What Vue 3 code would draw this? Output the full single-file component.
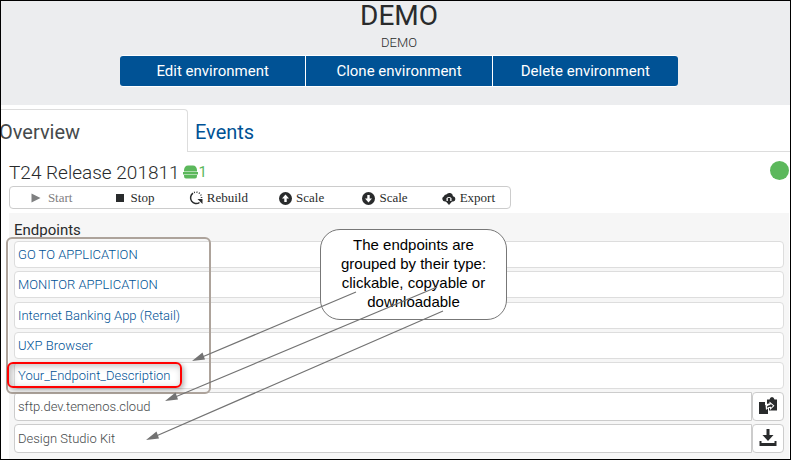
<script setup>
import { ref } from 'vue'

const environmentActions = ['Edit environment', 'Clone environment', 'Delete environment']
const tabs = ['Overview', 'Events']
const activeTab = ref('Overview')

const releaseActions = [
  { id: 'start', label: 'Start', icon: 'play', disabled: true },
  { id: 'stop', label: 'Stop', icon: 'stop' },
  { id: 'rebuild', label: 'Rebuild', icon: 'rebuild' },
  { id: 'scale-up', label: 'Scale', icon: 'up' },
  { id: 'scale-down', label: 'Scale', icon: 'down' },
  { id: 'export', label: 'Export', icon: 'export' }
]

const links = [
  'GO TO APPLICATION',
  'MONITOR APPLICATION',
  'Internet Banking App (Retail)',
  'UXP Browser',
  'Your_Endpoint_Description'
]

const resources = [
  { value: 'sftp.dev.temenos.cloud', action: 'Copy', icon: 'paste' },
  { value: 'Design Studio Kit', action: 'Download', icon: 'download' }
]
</script>

<template>
  <div class="page">
    <header class="hero">
      <h1>DEMO</h1>
      <p>DEMO</p>
      <div class="hero-actions">
        <button v-for="label in environmentActions" :key="label" type="button">{{ label }}</button>
      </div>
    </header>

    <nav class="tabs">
      <a
        v-for="tab in tabs"
        :key="tab"
        href="#"
        :class="{ active: tab === activeTab }"
        @click.prevent="activeTab = tab"
      >{{ tab }}</a>
    </nav>

    <main class="content">
      <div class="release">
        <h2>T24 Release 201811</h2>
        <span class="instances">
          <svg width="15" height="14" viewBox="0 0 15 14">
            <path d="M1 6.500V5Q1.500 0.500 5 0.500H10Q13.500 0.500 14 5V6.500ZM0 7H15V9.500H0ZM1 10H14V11Q14 13.500 12 13.500H3Q1 13.500 1 11Z" />
          </svg>
          <span>1</span>
        </span>
        <span class="status"></span>
      </div>

      <div class="toolbar">
        <button
          v-for="item in releaseActions"
          :key="item.id"
          type="button"
          :class="item.icon"
          :disabled="item.disabled"
        >
          <svg v-if="item.icon === 'play'" width="10" height="10" viewBox="0 0 10 10">
            <path d="M0.500 0.500L9.500 5L0.500 9.500Z" />
          </svg>
          <svg v-else-if="item.icon === 'stop'" width="8" height="8" viewBox="0 0 8 8">
            <path d="M0 0H8V8H0Z" />
          </svg>
          <svg v-else-if="item.icon === 'rebuild'" width="14" height="14" viewBox="0 0 14 14">
            <path class="stroke" d="M4 2.200A5.500 5.500 0 1 0 10.500 11.500" />
            <path class="stroke dots" d="M5 1.500A5.500 5.500 0 0 1 12.500 7" />
            <path d="M8.500 8H13.500V13Z" />
          </svg>
          <svg v-else-if="item.icon === 'up'" width="13" height="13" viewBox="0 0 13 13">
            <circle cx="6.500" cy="6.500" r="6.500" />
            <path class="cut" d="M6.500 2.500L10 6.500H7.700V10H5.300V6.500H3Z" />
          </svg>
          <svg v-else-if="item.icon === 'down'" width="13" height="13" viewBox="0 0 13 13">
            <circle cx="6.500" cy="6.500" r="6.500" />
            <path class="cut" d="M6.500 10.500L3 6.500H5.300V3H7.700V6.500H10Z" />
          </svg>
          <svg v-else width="14" height="13" viewBox="0 0 14 13">
            <path d="M3 9.500A2.700 2.700 0 0 1 2 4.300A2.200 2.200 0 0 1 4.300 2.500A3.700 3.700 0 0 1 11 4.200A2.700 2.700 0 0 1 11.300 9.500Z" />
            <path class="cut" d="M4.500 10V6.500Q4.500 5 7 5Q9.500 5 9.500 6.500V10Z" />
            <path d="M5.800 6H8.200V9H10.500L7 13L3.500 9H5.800Z" />
          </svg>
          <span>{{ item.label }}</span>
        </button>
      </div>

      <section class="panel">
        <h3>Endpoints</h3>
        <div class="links">
          <a v-for="link in links" :key="link" href="#" @click.prevent>{{ link }}</a>
        </div>
        <div class="resources">
          <div v-for="item in resources" :key="item.value" class="resource">
            <input type="text" readonly :value="item.value" :aria-label="item.action + ' endpoint'" />
            <button type="button" :aria-label="item.action">
              <svg v-if="item.icon === 'paste'" width="18" height="17" viewBox="0 0 18 17">
                <path d="M0 5H6V8H9V17H0Z" />
                <path d="M8 2.500H10.500Q11 0 13 0Q15 0 15.500 2.500H18V13.500H10V8H8Z" />
                <path class="cut" d="M6.500 8Q8 6 10.500 6.500V4.500L15.500 8.700L11 13V11Q8.500 11 7 13Z" />
                <path d="M8 9.500Q9.500 7.700 11.500 8V6.700L14 8.800L12 10.800V9.700Q9.500 9.500 8 11Z" />
              </svg>
              <svg v-else width="18" height="17" viewBox="0 0 18 17">
                <path d="M7.500 0H10.500V6H14.500L9 12L3.500 6H7.500ZM0.500 12H2.500V14H15.500V12H17.500V17H0.500Z" />
              </svg>
            </button>
          </div>
        </div>
      </section>
    </main>

    <div class="group-outline"></div>
    <div class="item-outline"></div>
    <aside class="callout">The endpoints are grouped by their type: clickable, copyable or downloadable</aside>
    <svg class="arrows" width="460" height="450" viewBox="0 0 460 450">
      <path class="line" d="M355 292L200 357.500M436 287L173 397.500M442 311L154 436.500" />
      <path d="M191 361L201.500 352.500L204 359.500ZM164 401L174.500 392.500L177 399.500ZM145 440L155.500 431.500L158 438.500Z" />
    </svg>
  </div>
</template>

<style>
body {
  margin: 0;
}
</style>

<style scoped>
* {
  box-sizing: border-box;
}

.page {
  position: relative;
  min-height: 100vh;
  border: 1px solid #000;
  background: #fff;
  color: #292b2c;
  font-family: Roboto, sans-serif;
  font-weight: 300;
  overflow: hidden;
}

h1, h2, h3, p {
  margin: 0;
}

button {
  font: inherit;
  color: inherit;
  padding: 0;
  cursor: pointer;
}

a {
  text-decoration: none;
  color: #005295;
}

.hero {
  display: flex;
  flex-direction: column;
  align-items: center;
  padding: 0 0 18px 7px;
  background: #ecedef;
}

h1 {
  font-size: 28px;
  line-height: 30px;
  font-weight: 400;
}

.hero p {
  font-size: 13px;
  line-height: 24px;
}

.hero-actions {
  display: grid;
  grid-template-columns: repeat(3, 1fr);
  gap: 1px;
  width: 558px;
  padding: 1px 0;
  border-radius: 4px;
  background: #fff;
}

.hero-actions button {
  height: 30px;
  border: 0;
  background: #005295;
  color: #fff;
  font-size: 15px;
  font-weight: 400;
}

.hero-actions button:first-child {
  border-radius: 3px 0 0 3px;
}

.hero-actions button:last-child {
  border-radius: 0 3px 3px 0;
}

.tabs {
  display: flex;
  margin-left: -2px;
  padding-top: 4px;
  border-bottom: 1px solid #ddd;
}

.tabs a {
  padding: 3px 7px 0;
  font-size: 20px;
  font-weight: 400;
  line-height: 38px;
  border-top: 1px solid transparent;
}

.tabs .active {
  width: 189px;
  margin-bottom: -1px;
  padding: 3px 0 1px;
  color: #464a4c;
  background: #fff;
  border-top: 1px solid #ddd;
  border-right: 1px solid #ddd;
  border-top-right-radius: 4px;
}

.content {
  padding: 7px 1px 0 8px;
}

.release {
  display: flex;
  align-items: center;
  height: 26px;
}

h2 {
  font-size: 19px;
  font-weight: 300;
}

.instances {
  display: flex;
  align-items: center;
  gap: 1px;
  padding-left: 3px;
  color: #5cb85c;
  font-size: 15px;
  font-weight: 400;
}

svg {
  display: block;
  flex: none;
  fill: currentColor;
}

.status {
  width: 19px;
  height: 19px;
  margin: 0 0 3px auto;
  border-radius: 50%;
  background: #5cb85c;
}

.toolbar {
  display: grid;
  grid-template-columns: repeat(6, 1fr);
  width: 502px;
  height: 23px;
  margin-top: 1px;
  border: 1px solid #ccc;
  border-radius: 4px;
}

.toolbar button {
  display: flex;
  align-items: center;
  justify-content: center;
  gap: 4px;
  padding-top: 1px;
  border: 0;
  background: none;
  font-family: "Liberation Serif", serif;
  font-size: 13px;
  font-weight: 400;
}

.toolbar .play,
.toolbar .stop {
  gap: 7px;
}

.toolbar button:disabled {
  color: #7f8081;
}

svg .cut {
  fill: #fff;
}

svg .stroke {
  fill: none;
  stroke: currentColor;
  stroke-width: 1.5;
}

svg .dots {
  stroke-dasharray: 1 1.500;
}

.panel {
  margin-top: 4px;
  padding: 7px 5px 6px;
  background: #f6f6f6;
}

h3 {
  margin-bottom: 1px;
  font-size: 15px;
  font-weight: 400;
  line-height: 20px;
}

.links {
  display: grid;
  align-content: space-between;
  min-height: 148px;
}

.links a,
.resource input,
.resource button {
  border: 1px solid #ddd;
  border-radius: 4px;
  background: #fff;
}

.links a {
  padding: 0 3px;
  font-size: 13px;
  line-height: 25px;
}

.resources {
  display: grid;
  gap: 3px;
  padding-top: 3px;
}

.resource {
  display: flex;
  height: 29px;
}

.resource input {
  flex: 1;
  min-width: 0;
  padding: 0 3px;
  border-color: #ccc;
  border-radius: 4px 0 0 4px;
  color: #464a4c;
  font: inherit;
  font-size: 13px;
}

.resource button {
  display: flex;
  align-items: center;
  justify-content: center;
  width: 32px;
  padding-bottom: 2px;
  border-color: #ccc;
}

.group-outline,
.item-outline,
.callout,
.arrows {
  position: absolute;
  pointer-events: none;
}

.group-outline {
  left: 5px;
  top: 236px;
  width: 205px;
  height: 157px;
  border: 2px solid #ada39b;
  border-radius: 6px;
}

.item-outline {
  left: 6px;
  top: 361px;
  width: 175px;
  height: 26px;
  border: 2px solid #f00;
  border-radius: 6px;
  box-shadow: 2px 2px 5px rgba(0, 0, 0, 0.3), inset 2px 2px 7px rgba(0, 0, 0, 0.25);
}

.callout {
  left: 319px;
  top: 228px;
  width: 187px;
  padding: 5px 16px 8px;
  border: 1px solid #777;
  border-radius: 20px;
  background: #fff;
  color: #000;
  font-family: "Liberation Sans", sans-serif;
  font-size: 15px;
  font-weight: 400;
  line-height: 19px;
  text-align: center;
}

.arrows {
  left: 0;
  top: -1px;
  color: #737373;
}

.arrows .line {
  fill: none;
  stroke: currentColor;
  stroke-width: 1.2;
}
</style>
